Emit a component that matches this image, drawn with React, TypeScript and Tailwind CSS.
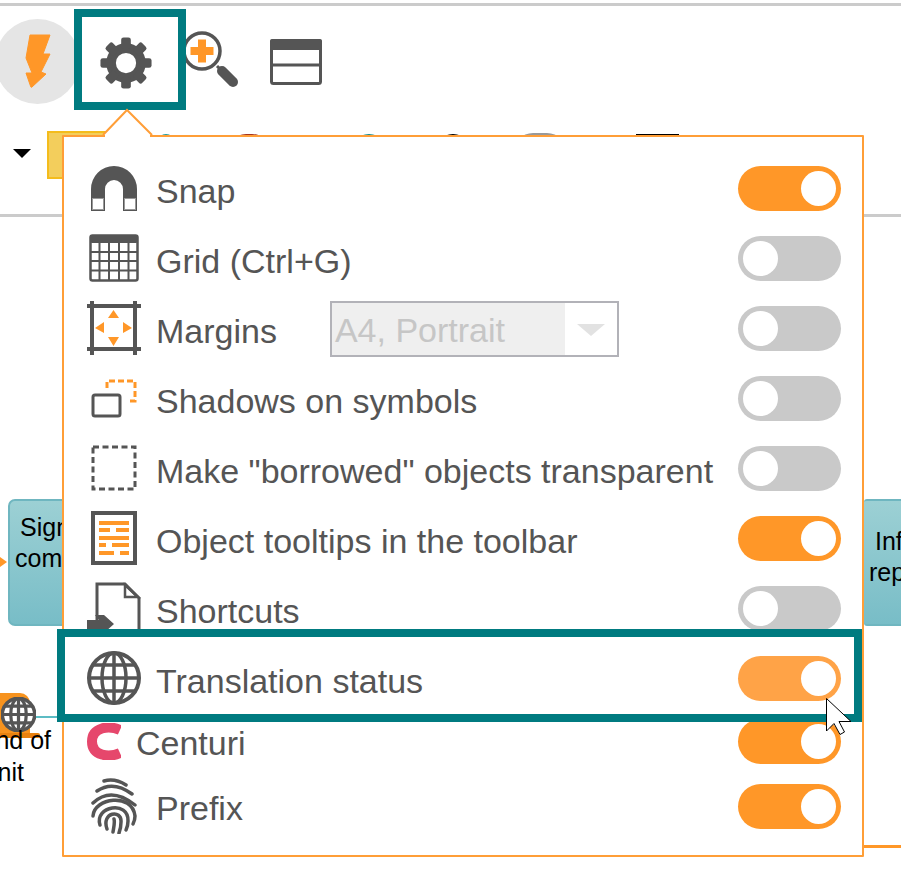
// Settings popover over the diagram editor toolbar.
import type { ReactNode } from 'react'

// ── Icons ──────────────────────────────────────────────────────────────────────

const DARK = '#555555'
const ORANGE = '#ff9728'

function BoltIcon() {
  return (
    <svg width="30" height="56" viewBox="0 0 30 56">
      <path
        d="M5 1H25L18 20H25L16 38L21 40L7 53Q6 54 5.500 52L1 39H7L1 24Z"
        fill={ORANGE}
        stroke={ORANGE}
        strokeWidth="1"
        strokeLinejoin="round"
      />
    </svg>
  )
}

function GearIcon() {
  return (
    <svg width="54" height="54" viewBox="0 0 56 56">
      <circle cx="28" cy="28" r="15.500" fill="none" stroke={DARK} strokeWidth="10" />
      {[0, 45, 90, 135, 180, 225, 270, 315].map((a) => (
        <rect key={a} x="23" y="1.500" width="10" height="12" rx="2.500" fill={DARK} transform={`rotate(${a} 28 28)`} />
      ))}
    </svg>
  )
}

function ZoomIcon() {
  return (
    <svg width="58" height="58" viewBox="0 0 58 58">
      <circle cx="20" cy="20" r="18" fill="#fff" stroke={DARK} strokeWidth="3.500" />
      <path d="M20 8.500V31.500M8.500 20H31.500" stroke={ORANGE} strokeWidth="8" />
      <path d="M35 35L38 38" stroke={DARK} strokeWidth="3" />
      <path d="M40 40L51 51" stroke={DARK} strokeWidth="10" strokeLinecap="round" />
    </svg>
  )
}

function WindowIcon() {
  return (
    <svg width="52" height="46" viewBox="0 0 52 46">
      <rect x="1.500" y="1.500" width="49" height="43" rx="2" fill="#fff" stroke={DARK} strokeWidth="3" />
      <rect x="0" y="0" width="52" height="11" rx="2" fill={DARK} />
      <path d="M1 26H51" stroke={DARK} strokeWidth="3" />
    </svg>
  )
}

function MagnetIcon() {
  return (
    <svg width="46" height="45" viewBox="0 0 46 45">
      <path d="M0 23A23 23 0 0 1 46 23V45H32V23A9 9 0 0 0 14 23V45H0Z" fill={DARK} />
      <rect x="1.500" y="32.500" width="11" height="11" fill="#fff" stroke="#999" />
      <rect x="33.500" y="32.500" width="11" height="11" fill="#fff" stroke="#999" />
    </svg>
  )
}

function GridIcon() {
  return (
    <svg width="50" height="48" viewBox="0 0 50 48">
      <rect x="1.500" y="1.500" width="47" height="45" rx="2" fill="#fff" stroke={DARK} strokeWidth="2.500" />
      <rect x="1" y="1" width="48" height="8" rx="2" fill={DARK} />
      <path d="M10.500 9V46M20 9V46M30 9V46M39.500 9V46M2 18H48M2 27H48M2 36.500H48" stroke={DARK} strokeWidth="2" />
    </svg>
  )
}

function MarginsIcon() {
  return (
    <svg width="54" height="54" viewBox="0 0 54 54">
      <path d="M0 5H54M0 48H54M5 0V54M48 0V54" stroke={DARK} strokeWidth="4" />
      <path d="M26.500 9L32 17H21ZM26.500 45L21 36H32ZM8 27L17 21V32ZM45 27L36 32V21Z" fill={ORANGE} />
    </svg>
  )
}

function ShadowsIcon() {
  return (
    <svg width="46" height="40" viewBox="0 0 46 40">
      <path d="M16 10V3H44V23H36" fill="none" stroke={ORANGE} strokeWidth="3" strokeDasharray="6 3" />
      <rect x="2" y="17" width="27" height="21" rx="2" fill="none" stroke={DARK} strokeWidth="3" />
    </svg>
  )
}

function DashedIcon() {
  return (
    <svg width="46" height="46" viewBox="0 0 46 46">
      <rect x="2" y="2" width="42" height="42" fill="none" stroke={DARK} strokeWidth="3" strokeDasharray="6 3.500" />
    </svg>
  )
}

function TooltipIcon() {
  return (
    <svg width="46" height="54" viewBox="0 0 46 54">
      <rect x="2" y="2" width="42" height="50" fill="none" stroke={DARK} strokeWidth="4" />
      <path
        d="M8 12H38M8 19H19M25 19H38M8 27H38M8 34H15M21 34H38M8 42H23M29 42H38"
        stroke={ORANGE}
        strokeWidth="4"
      />
    </svg>
  )
}

function ShortcutIcon() {
  return (
    <svg width="54" height="52" viewBox="0 0 54 52">
      <path d="M10 40V2H38L52 16V52" fill="none" stroke={DARK} strokeWidth="3" />
      <path d="M38 3V15H51Z" fill="none" stroke={DARK} strokeWidth="2.500" />
      <path d="M0 38H12L8 33H17L27 42L18 50H0Z" fill={DARK} />
    </svg>
  )
}

function GlobeIcon({ size, weight = 3.5 }: { size: number; weight?: number }) {
  return (
    <svg width={size} height={size} viewBox="0 0 54 54">
      <circle cx="27" cy="27" r="25" fill="#fff" stroke={DARK} strokeWidth={weight + 0.5} />
      <ellipse cx="27" cy="27" rx="12" ry="25" fill="none" stroke={DARK} strokeWidth={weight} />
      <path d="M27 2V52M2 27H52M6 14H48M6 40H48" stroke={DARK} strokeWidth={weight} />
    </svg>
  )
}

function CenturiIcon() {
  return (
    <svg width="34" height="37" viewBox="0 0 34 37">
      <path
        d="M33 7C22 2 5 4 5 18.500C5 33 22 35 33 30"
        fill="none"
        stroke="#e6476c"
        strokeWidth="10"
      />
    </svg>
  )
}

function FingerprintIcon() {
  return (
    <svg width="46" height="56" viewBox="0 0 46 56" fill="none" stroke={DARK} strokeWidth="3.500" strokeLinecap="round">
      <path d="M13 3Q24 0 35 7" />
      <path d="M6 13Q22 2 41 16" />
      <path d="M2 25Q20 8 44 27" />
      <path d="M2 38C3 20 41 14 44 38Q44 42 42 46" />
      <path d="M9 47C3 28 38 22 37 43Q37 48 35 52" />
      <path d="M16 51C10 34 31 31 30 44Q30 50 28 55" />
      <path d="M22 54C23 48 24 44 23 41" />
    </svg>
  )
}

function CursorIcon() {
  return (
    <svg width="27" height="38" viewBox="0 0 27 38">
      <path d="M0.500 0.500V33L8 25.500L14 36.500L18.500 34L13 23.500H25Z" fill="#fff" stroke="#000" strokeWidth="1" />
    </svg>
  )
}

// ── Rows ───────────────────────────────────────────────────────────────────────

function Toggle({ on, hover, className }: { on?: boolean; hover?: boolean; className: string }) {
  const track = hover ? 'bg-[#ffa347] justify-end' : on ? 'bg-[#ff9728] justify-end' : 'bg-[#c9c9c9] justify-start'
  return (
    <div className={`ml-auto flex h-[45px] w-[103px] shrink-0 items-center rounded-full px-[5px] ${track} ${className}`}>
      <div className="h-[35px] w-[35px] rounded-full bg-white" />
    </div>
  )
}

function Row({
  icon,
  label,
  on,
  hover,
  children,
}: {
  icon: ReactNode
  label: string
  on?: boolean
  hover?: boolean
  children?: ReactNode
}) {
  return (
    <div className="flex h-[70px] items-center">
      <div className="flex w-[92px] shrink-0 items-center justify-center pl-[8px]">{icon}</div>
      <span className="mt-[6px] whitespace-nowrap">{label}</span>
      {children}
      <Toggle on={on} hover={hover} className="mt-[1px]" />
    </div>
  )
}

// ── Main component ─────────────────────────────────────────────────────────────

export default function App() {
  return (
    <div className="relative h-[889px] w-[901px] overflow-hidden bg-white font-['Liberation_Sans',sans-serif]">
      <div className="mt-[3px] h-[3px] bg-[#cbcbcb]" />

      {/* Top toolbar */}
      <div className="flex h-[104px] items-start pt-[3px]">
        <div className="ml-[-5px] mt-[10px] flex h-[85px] w-[85px] shrink-0 items-center justify-center rounded-full bg-[#e5e5e5] pl-[5px]">
          <BoltIcon />
        </div>
        <div className="relative ml-[-6px] flex h-[101px] w-[112px] shrink-0 items-center justify-center border-[8px] border-[#007b80] bg-white pr-[8px] pt-[7px]">
          <GearIcon />
        </div>
        <div className="ml-[-4px] mt-[22px]">
          <ZoomIcon />
        </div>
        <div className="ml-[30px] mt-[30px]">
          <WindowIcon />
        </div>
      </div>

      {/* Second toolbar, mostly behind the popover */}
      <div className="flex h-[107px] items-start border-b-[3px] border-[#cbcbcb] pt-[21px]">
        <div className="ml-[13px] mt-[18px] h-0 w-0 border-x-[9px] border-t-[9px] border-x-transparent border-t-black" />
        <div className="ml-[16px] h-[48px] w-[60px] shrink-0 border-2 border-[#f4bc1c] bg-[#f3ce5c]" />
        <div className="ml-[51px] mt-[3px] h-[20px] w-[16px] shrink-0 rounded-full bg-[#1d9a9c]" />
        <div className="ml-[52px] mt-[3px] h-[40px] w-[46px] shrink-0 rounded-full bg-[#a5331d]" />
        <div className="ml-[77px] mt-[3px] h-[40px] w-[40px] shrink-0 rounded-full bg-[#0f8a8c]" />
        <div className="ml-[44px] mt-[3px] h-[40px] w-[40px] shrink-0 rounded-full bg-black" />
        <div className="ml-[40px] mt-[2px] h-[40px] w-[54px] shrink-0 rounded-full bg-[#999999]" />
        <div className="ml-[69px] mt-[3px] h-[40px] w-[43px] shrink-0 border-t-2 border-black" />
      </div>

      {/* Diagram canvas behind the popover */}
      <div className="absolute left-[8px] top-[499px] h-[127px] w-[100px] rounded-[7px] border-2 border-[#6fb6c0] bg-gradient-to-b from-[#9cd0d4] to-[#78bdc7] pl-[10px] pt-[11px] text-[25px] leading-[31px] text-black">
        <div>Sign</div>
        <div className="ml-[-5px]">com</div>
      </div>
      <div className="absolute left-0 top-[557px] h-0 w-0 border-y-[5px] border-l-[7px] border-y-transparent border-l-[#ff9728]" />
      <div className="absolute left-[864px] top-[499px] h-[127px] w-[60px] rounded-l-[3px] border-y-2 border-[#6fb6c0] bg-gradient-to-b from-[#9cd0d4] to-[#78bdc7] pl-[11px] pt-[25px] text-[25px] leading-[31px] text-black">
        <div>Inf</div>
        <div className="ml-[-6px]">rep</div>
      </div>
      <div className="absolute left-[-10px] top-[693px] h-[40px] w-[40px] rounded-tr-[10px] bg-[#f7931e]" />
      <div className="absolute left-[-10px] top-[733px] h-[5px] w-[50px] rounded-r-[2px] bg-[#e8820f]" />
      <div className="absolute left-[30px] top-[716px] h-[2px] w-[32px] bg-[#5cbcc4]" />
      <div className="absolute left-[1px] top-[697px]">
        <GlobeIcon size={35} weight={5} />
      </div>
      <div className="absolute left-[-23px] top-[724px] text-right text-[25px] leading-[32px] text-black">
        <div className="w-[74px] whitespace-nowrap">nd of</div>
        <div className="w-[47px]">nit</div>
      </div>
      <div className="absolute left-[863px] top-[845px] h-[3px] w-[38px] bg-[#ff9728]" />

      {/* Settings popover */}
      <div className="absolute left-[62px] top-[135px] h-[722px] w-[802px] rounded-[1px] border-2 border-[#ff9e37] bg-white pr-[21px] pt-[16px] text-[34px] leading-[37px] text-[#555555]">
        <svg className="absolute left-[38px] top-[-29px]" width="52" height="30" viewBox="0 0 52 30">
          <path d="M1 27L25 2L50 27" fill="#fff" stroke="#ff9e37" strokeWidth="2" />
          <path d="M3 27H48V29H3Z" fill="#fff" />
        </svg>

        <Row icon={<MagnetIcon />} label="Snap" on />
        <Row icon={<GridIcon />} label="Grid (Ctrl+G)" />
        <Row icon={<MarginsIcon />} label="Margins">
          <div className="ml-[53px] mt-[1px] flex h-[56px] w-[289px] shrink-0 border-2 border-[#b2b2b8] bg-white">
            <div className="flex w-[233px] items-center bg-[#efefef] pl-[3px] pt-[4px] text-[#c6c6c6]">A4, Portrait</div>
            <div className="flex flex-1 items-center justify-center">
              <div className="mt-[2px] h-0 w-0 border-x-[14px] border-t-[12px] border-x-transparent border-t-[#e2e2e2]" />
            </div>
          </div>
        </Row>
        <Row icon={<ShadowsIcon />} label="Shadows on symbols" />
        <Row icon={<DashedIcon />} label={'Make "borrowed" objects transparent'} />
        <Row icon={<TooltipIcon />} label="Object tooltips in the toolbar" on />
        <Row icon={<ShortcutIcon />} label="Shortcuts" />
        <Row icon={<GlobeIcon size={54} />} label="Translation status" hover />

        <div className="flex h-[65px] items-start">
          <div className="ml-[23px] mt-[10px] shrink-0">
            <CenturiIcon />
          </div>
          <span className="ml-[15px] mt-[12px]">Centuri</span>
          <Toggle on className="mt-[6px]" />
        </div>
        <div className="flex h-[65px] items-start">
          <div className="flex w-[92px] shrink-0 justify-center pl-[8px]">
            <FingerprintIcon />
          </div>
          <span className="mt-[12px]">Prefix</span>
          <Toggle on className="mt-[6px]" />
        </div>
      </div>

      {/* Highlight on the row under the pointer */}
      <div className="absolute left-[57px] top-[629px] h-[93px] w-[805px] border-[8px] border-[#007b80]" />
      <div className="absolute left-[826px] top-[698px]">
        <CursorIcon />
      </div>
    </div>
  )
}
